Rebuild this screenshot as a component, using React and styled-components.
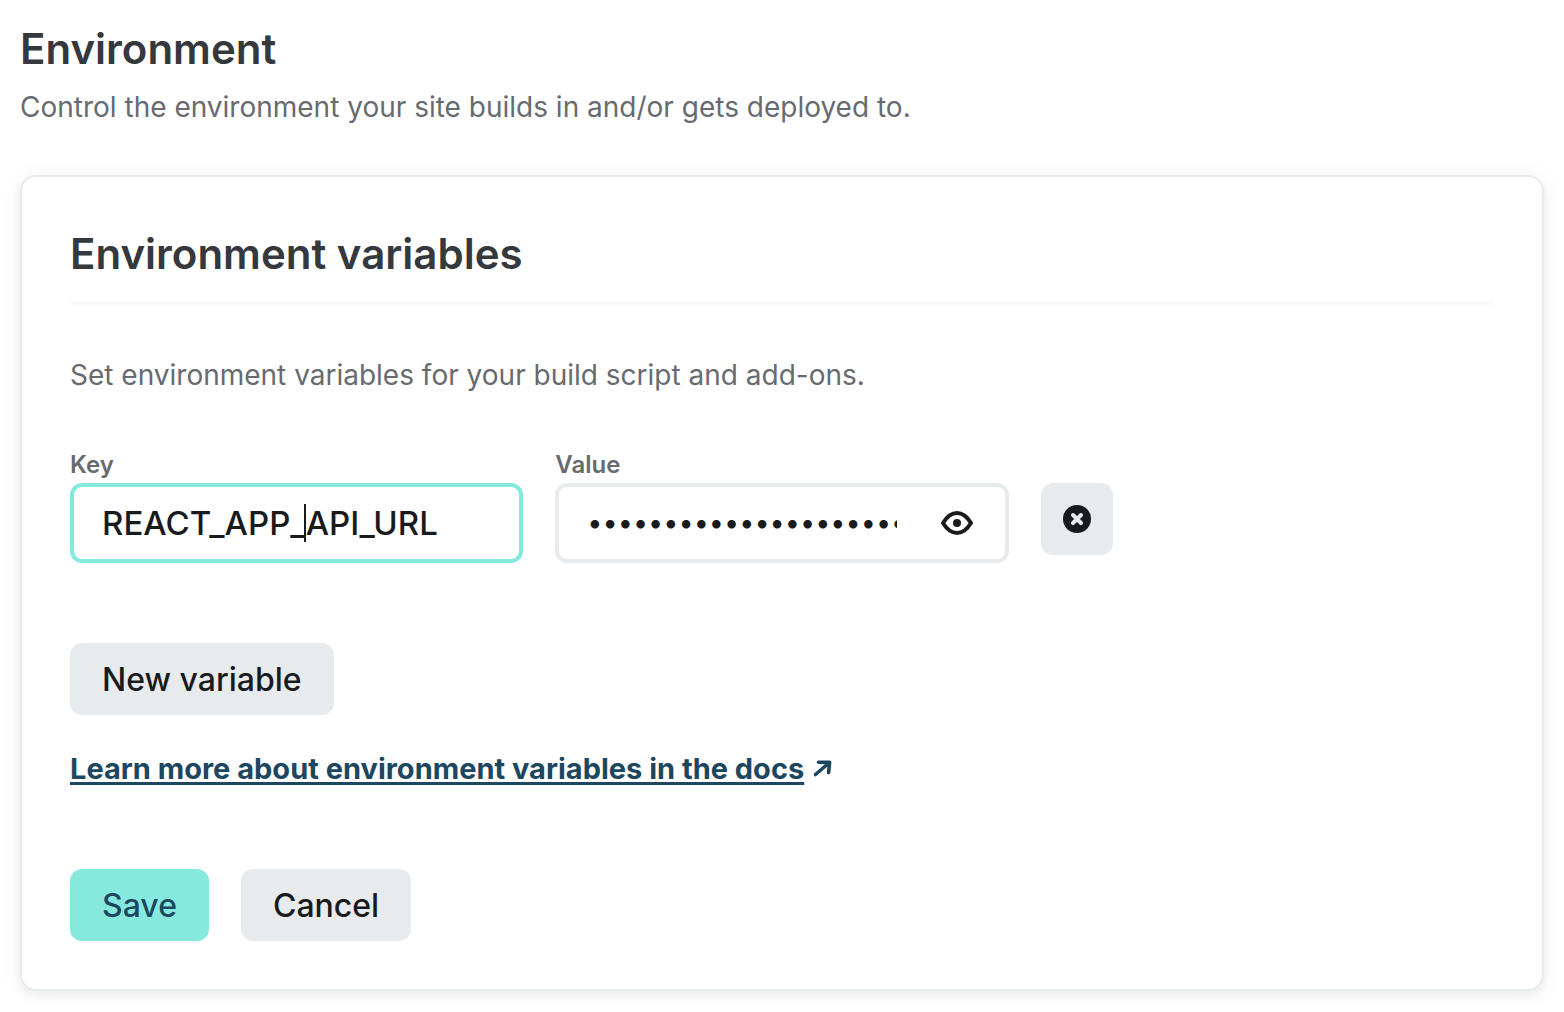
import React, { useLayoutEffect, useRef, useState } from "react";
import styled, { createGlobalStyle } from "styled-components";

const GlobalStyle = createGlobalStyle`
  *, *::before, *::after { box-sizing: border-box; }
  body {
    margin: 0;
    background: #fff;
    color: #181a1c;
    font-family: Inter, "Liberation Sans", sans-serif;
    font-size: 28px;
    line-height: 40px;
  }
`;

const Page = styled.main`
  padding: 20px;
`;

const Heading = styled.h1`
  margin: 0;
  color: #35383d;
  font-size: 42px;
  font-weight: 600;
  line-height: 58px;
`;

const Copy = styled.p`
  margin: 0;
  color: #676b6f;
`;

const Intro = styled.header`
  display: grid;
  gap: 9px;
  margin-bottom: 48px;
`;

const Card = styled.section`
  display: flex;
  flex-direction: column;
  padding: 48px;
  border: 2px solid #e7ebed;
  border-radius: 16px;
  box-shadow: 0 4px 8px rgba(14, 30, 37, 0.06), 0 2px 24px rgba(14, 30, 37, 0.05);
`;

const CardHeader = styled.header`
  padding-bottom: 18px;
  margin-bottom: 50px;
  border-bottom: 4px solid #f9fafa;
`;

const Fields = styled.div`
  display: grid;
  grid-template-columns: repeat(3, minmax(0, 1fr));
  gap: 32px;
  margin: 52px 0 80px;
`;

const Field = styled.div`
  display: flex;
  flex-direction: column;
`;

const Label = styled.label`
  color: #676b6f;
  font-size: 24px;
  font-weight: 600;
  line-height: 36px;
`;

const Control = styled.div`
  position: relative;
  display: flex;
  align-items: center;
  height: 80px;
  padding: 0 28px;
  border: 4px solid ${(p) => (p.$active ? "#85eadd" : "#e7ebed")};
  border-radius: 12px;
`;

const TextInput = styled.input`
  flex: 1;
  min-width: 0;
  padding: 0;
  border: 0;
  outline: 0;
  background: transparent;
  color: #181a1c;
  caret-color: transparent;
  font: 500 33px/40px Inter, "Liberation Sans", sans-serif;

  &[type="password"] {
    font-size: 27px;
    font-weight: 400;
  }
`;

const Caret = styled.span`
  position: absolute;
  top: 17px;
  width: 2px;
  height: 38px;
  background: #181a1c;
  pointer-events: none;
`;

const IconButton = styled.button`
  display: flex;
  padding: 0;
  margin: 0 4px 0 44px;
  border: 0;
  background: none;
  color: #181a1c;
`;

const Button = styled.button`
  display: flex;
  align-items: center;
  justify-content: center;
  align-self: flex-start;
  height: 72px;
  padding: 2px 32px 0;
  border: 0;
  border-radius: 12px;
  background: ${(p) => (p.$primary ? "#85eadd" : "#e7ebed")};
  color: ${(p) => (p.$primary ? "#1d4760" : "#181a1c")};
  font: 500 32px/40px Inter, "Liberation Sans", sans-serif;
`;

const RemoveButton = styled(Button)`
  width: 72px;
  padding: 0;
  margin-top: 36px;
`;

const DocsLine = styled.p`
  display: flex;
  align-items: center;
  gap: 8px;
  margin: 34px 0 80px;
`;

const DocsLink = styled.a`
  color: #1d4760;
  font-size: 29px;
  font-weight: 700;
  text-decoration: underline;
  text-decoration-thickness: 3px;
  text-underline-offset: 3px;
`;

const Actions = styled.div`
  display: flex;
  gap: 32px;
`;

const EyeIcon = () => (
  <svg width="32" height="24" viewBox="0 0 32 24" aria-hidden="true">
    <path
      d="M2 12C6 5.500 10.500 2 16 2s10 3.500 14 10c-4 6.500-8.500 10-14 10S6 18.500 2 12z"
      fill="none"
      stroke="currentColor"
      strokeWidth="4"
      strokeLinejoin="round"
    />
    <circle cx="16" cy="12" r="4" fill="currentColor" />
  </svg>
);

const RemoveIcon = () => (
  <svg width="28" height="28" viewBox="0 0 28 28" aria-hidden="true">
    <circle cx="14" cy="14" r="14" fill="#181a1c" />
    <path d="M10 10l8 8m0-8l-8 8" stroke="#e7ebed" strokeWidth="4" strokeLinecap="round" />
  </svg>
);

const ArrowIcon = () => (
  <svg width="20" height="18" viewBox="0 0 20 18" aria-hidden="true">
    <path
      d="M3.500 14.500L17 3M6.500 2.200L17.600 2.400L16.600 12.500"
      fill="none"
      stroke="#1d4760"
      strokeWidth="3.600"
      strokeLinecap="round"
      strokeLinejoin="round"
    />
  </svg>
);

function KeyInput() {
  const input = useRef(null);
  const [value, setValue] = useState("REACT_APP_API_URL");
  const [position, setPosition] = useState(10);
  const [left, setLeft] = useState(0);

  useLayoutEffect(() => {
    const el = input.current;
    const context = document.createElement("canvas").getContext("2d");
    context.font = getComputedStyle(el).font;
    setLeft(el.offsetLeft + Math.floor(context.measureText(value.slice(0, position)).width) - 1);
  }, [value, position]);

  return (
    <Control $active>
      <TextInput
        id="key"
        ref={input}
        value={value}
        spellCheck={false}
        onChange={(e) => setValue(e.target.value)}
        onSelect={(e) => setPosition(e.target.selectionStart)}
      />
      <Caret style={{ left }} />
    </Control>
  );
}

export default function App() {
  return (
    <>
      <GlobalStyle />
      <Page>
        <Intro>
          <Heading>Environment</Heading>
          <Copy>Control the environment your site builds in and/or gets deployed to.</Copy>
        </Intro>
        <Card>
          <CardHeader>
            <Heading as="h2">Environment variables</Heading>
          </CardHeader>
          <Copy>Set environment variables for your build script and add-ons.</Copy>
          <Fields>
            <Field>
              <Label htmlFor="key">Key</Label>
              <KeyInput />
            </Field>
            <Field>
              <Label htmlFor="value">Value</Label>
              <Control>
                <TextInput id="value" type="password" defaultValue="https://api.example.com/v1" />
                <IconButton type="button" aria-label="Show value">
                  <EyeIcon />
                </IconButton>
              </Control>
            </Field>
            <RemoveButton type="button" aria-label="Remove variable">
              <RemoveIcon />
            </RemoveButton>
          </Fields>
          <Button type="button">New variable</Button>
          <DocsLine>
            <DocsLink href="#docs">Learn more about environment variables in the docs</DocsLink>
            <ArrowIcon />
          </DocsLine>
          <Actions>
            <Button type="submit" $primary>Save</Button>
            <Button type="button">Cancel</Button>
          </Actions>
        </Card>
      </Page>
    </>
  );
}
